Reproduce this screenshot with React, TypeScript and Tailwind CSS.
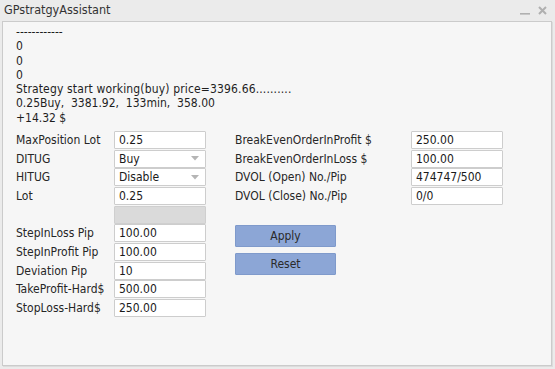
import React from "react";

const font = { fontFamily: '"DejaVu Sans Condensed", "Liberation Sans", sans-serif' };

function Field({ value, select, disabled }: { value?: string; select?: boolean; disabled?: boolean }) {
  if (disabled) {
    return <div className="h-[18px] w-[92px] border border-[#cfcfcf] bg-[#dadada] rounded-[1px]" />;
  }
  return (
    <div className="h-[18px] w-[92px] border border-[#cdcdcd] bg-white rounded-[1px] flex items-center pl-[4px] pr-[6px] text-[12px] text-[#1a1a1a] leading-none">
      <span className="flex-1">{value}</span>
      {select && (
        <svg width="8" height="5" viewBox="0 0 8 5">
          <path d="M0 0 H8 L4 4.5 Z" fill="#b5b5b5" />
        </svg>
      )}
    </div>
  );
}

function Row({ label, children }: { label: string; children: React.ReactNode }) {
  return (
    <div className="flex items-center h-[18px]">
      <div className="w-[98px] text-[12px] text-[#262626] leading-none whitespace-nowrap">{label}</div>
      {children}
    </div>
  );
}

export default function App() {
  return (
    <div className="w-[555px] h-[369px] bg-[#ebebeb] relative overflow-hidden" style={font}>
      <div className="h-[21px] flex items-center pl-[4px] pr-[8px]">
        <div className="flex-1 text-[12.5px] text-[#333]">GPstratgyAssistant</div>
        <div className="flex items-center gap-[8px] text-[#aaa]">
          <svg width="10" height="10" viewBox="0 0 10 10"><rect x="0" y="7" width="10" height="1.6" fill="#b0b0b0" /></svg>
          <svg width="9" height="9" viewBox="0 0 9 9"><path d="M1 1 L8 8 M8 1 L1 8" stroke="#b0b0b0" strokeWidth="2" /></svg>
        </div>
      </div>
      <div className="ml-[2px] w-[550px] h-[345px] border border-[#cbcbcb] bg-[#f6f6f6] shadow-[1px_1px_0_#dcdcdc]">
        <div className="pl-[13px] pt-[3px] text-[12px] leading-[14.3px] text-[#1e1e1e]">
          <div>------------</div>
          <div>0</div>
          <div>0</div>
          <div>0</div>
          <div className="tracking-[0.15px]">Strategy start working(buy) price=3396.66..........</div>
          <div>0.25Buy,&nbsp; 3381.92,&nbsp; 133min,&nbsp; 358.00</div>
          <div>+14.32 $</div>
        </div>
        <div className="flex mt-[6px] pl-[13px]">
          <div className="flex flex-col gap-[0.67px] w-[219px]">
            <Row label="MaxPosition Lot"><Field value="0.25" /></Row>
            <Row label="DITUG"><Field value="Buy" select /></Row>
            <Row label="HITUG"><Field value="Disable" select /></Row>
            <Row label="Lot"><Field value="0.25" /></Row>
            <Row label=""><Field disabled /></Row>
            <Row label="StepInLoss Pip"><Field value="100.00" /></Row>
            <Row label="StepInProfit Pip"><Field value="100.00" /></Row>
            <Row label="Deviation Pip"><Field value="10" /></Row>
            <Row label="TakeProfit-Hard$"><Field value="500.00" /></Row>
            <Row label="StopLoss-Hard$"><Field value="250.00" /></Row>
          </div>
          <div className="flex flex-col">
            <div className="flex flex-col gap-[0.67px]">
              {[
                ["BreakEvenOrderInProfit $", "250.00"],
                ["BreakEvenOrderInLoss $", "100.00"],
                ["DVOL (Open) No./Pip", "474747/500"],
                ["DVOL (Close) No./Pip", "0/0"],
              ].map(([l, v]) => (
                <div key={l} className="flex items-center h-[18px]">
                  <div className="w-[176px] text-[12px] text-[#262626] leading-none whitespace-nowrap">{l}</div>
                  <Field value={v} />
                </div>
              ))}
            </div>
            <div className="flex flex-col gap-[6px] mt-[20px]">
              <button className="w-[101px] h-[22px] bg-[#8ca6d6] border border-[#7f9acb] text-[12px] text-[#2a2a2a] rounded-[1px]">Apply</button>
              <button className="w-[101px] h-[22px] bg-[#8ca6d6] border border-[#7f9acb] text-[12px] text-[#2a2a2a] rounded-[1px]">Reset</button>
            </div>
          </div>
        </div>
      </div>
    </div>
  );
}
